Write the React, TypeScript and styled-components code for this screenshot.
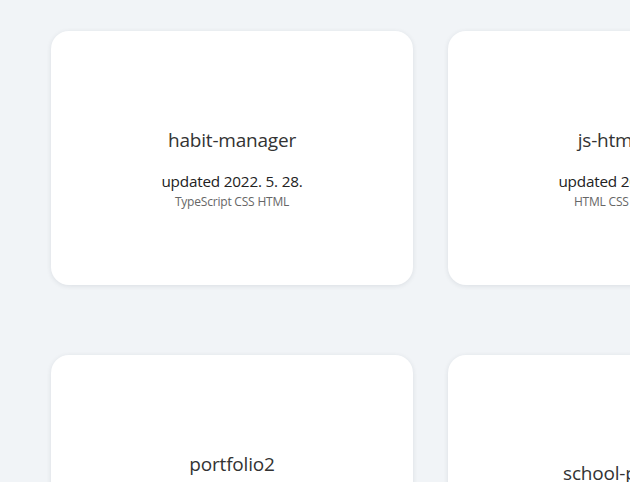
import React from "react";
import styled, { createGlobalStyle } from "styled-components";

const Global = createGlobalStyle`
  html, body { margin: 0; padding: 0; background: #f1f4f7; }
  body { font-family: "Open Sans", "Noto Sans", sans-serif; overflow: hidden; }
`;

const Page = styled.main`
  padding: 31px 0 0 51px;
  width: 1200px;
`;

const Grid = styled.div`
  display: grid;
  grid-template-columns: repeat(2, 362px);
  grid-auto-rows: 254px;
  column-gap: 35px;
  row-gap: 70px;
`;

const Card = styled.article`
  background: #ffffff;
  border-radius: 18px;
  box-shadow: 0 1px 5px rgba(30, 40, 60, 0.1);
  display: flex;
  flex-direction: column;
  align-items: center;
  justify-content: center;
  padding-top: 20px;
  box-sizing: border-box;
`;

const Title = styled.h2`
  margin: 0;
  font-size: 19px;
  line-height: 24px;
  font-weight: 400;
  color: #333;
  letter-spacing: -0.2px;
`;

const Updated = styled.p`
  margin: 19px 0 0;
  font-size: 15.3px;
  line-height: 20px;
  color: #222;
  letter-spacing: -0.2px;
`;

const Tech = styled.p`
  margin: 4px 0 0;
  font-size: 12px;
  line-height: 14px;
  color: #666;
  letter-spacing: -0.2px;
`;

type Repo = { name: string; updated: string; tech?: string };

const repos: Repo[] = [
  { name: "habit-manager", updated: "2022. 5. 28.", tech: "TypeScript CSS HTML" },
  { name: "js-html-css2", updated: "2022. 5. 20.", tech: "HTML CSS JavaScript" },
  { name: "portfolio2", updated: "2022. 5. 12.", tech: "TypeScript CSS HTML" },
  { name: "school-projects", updated: "2022. 4. 30." },
];

export default function App() {
  return (
    <Page>
      <Global />
      <Grid>
        {repos.map((r) => (
          <Card key={r.name}>
            <Title>{r.name}</Title>
            <Updated>updated {r.updated}</Updated>
            {r.tech && <Tech>{r.tech}</Tech>}
          </Card>
        ))}
      </Grid>
    </Page>
  );
}
